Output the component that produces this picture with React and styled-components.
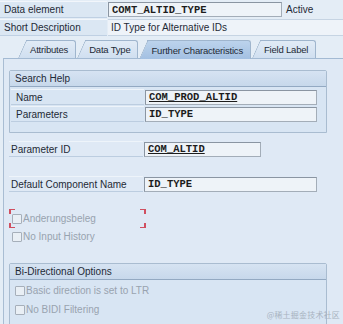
import React from "react";
import styled, { createGlobalStyle, css } from "styled-components";

const Global = createGlobalStyle`
  html, body { margin: 0; padding: 0; }
  body {
    width: 343px; height: 324px; overflow: hidden;
    background: #e4edf6;
    font-family: "Liberation Sans", Arial, sans-serif;
    font-size: 10px;
    color: #1e2a36;
  }
`;

const Page = styled.div`
  position: relative;
  width: 343px;
  height: 324px;
  overflow: hidden;
`;

const HeadGrid = styled.div`
  display: grid;
  grid-template-columns: 107px 1fr;
  grid-auto-rows: 17px;
  row-gap: 1px;
  padding-top: 1px;
`;

const HeadLabel = styled.div`
  display: flex;
  align-items: center;
  padding-left: 4px;
  background: #dbe7f3;
  border-top: 1px solid #f2f6fb;
  border-bottom: 1px solid #bfd0e3;
`;

const HeadValue = styled.div`
  display: flex;
  align-items: center;
  gap: 4px;
  padding-left: 1px;
`;

const Field = styled.div`
  box-sizing: border-box;
  height: 15px;
  width: ${(p) => p.$w}px;
  display: flex;
  align-items: center;
  padding-left: 3px;
  background: #eef3f8;
  border: 1px solid #a3adb8;
  border-top-color: #8a95a2;
  border-left-color: #8a95a2;
  font-family: "Liberation Mono", "Courier New", monospace;
  font-size: 10.5px;
  font-weight: bold;
  color: #1c1c1c;
  white-space: pre;
  ${(p) =>
    p.$link &&
    css`
      text-decoration: underline;
      text-underline-offset: 1px;
    `}
`;

const ReadOnly = styled.div`
  flex: 1;
  align-self: stretch;
  display: flex;
  align-items: center;
  padding-left: 3px;
  background: #eef3f9;
  border-top: 1px solid #c6d4e3;
  border-bottom: 1px solid #c6d4e3;
`;

const Status = styled.span`
  color: #1e2a36;
`;

const TabStrip = styled.div`
  display: flex;
  align-items: flex-end;
  height: 20px;
  margin-top: 2px;
  padding-left: 26px;
  gap: 9px;
  white-space: nowrap;
`;

const Tab = styled.div`
  position: relative;
  z-index: 0;
  height: 17px;
  display: flex;
  align-items: center;
  padding: 0 7px 0 4px;
  font-size: 9.5px;
  letter-spacing: -0.2px;
  border: 1px solid #9fb5cd;
  border-left: none;
  border-bottom: none;
  border-radius: 0 3px 0 0;
  color: #1e2a36;
  background: ${(p) =>
    p.$active
      ? "linear-gradient(#bcd3ec, #a3c0e2)"
      : "linear-gradient(#e1ebf6, #d0dff0)"};
  ${(p) => p.$active && css`margin-bottom: -1px; height: 18px;`}
  &::before {
    content: "";
    position: absolute;
    z-index: -1;
    left: -8px;
    top: -1px;
    bottom: 0;
    width: 16px;
    background: inherit;
    border-left: 1px solid #9fb5cd;
    border-top: 1px solid #9fb5cd;
    border-radius: 2px 0 0 0;
    transform: skewX(-24deg);
    transform-origin: bottom left;
  }
`;

const Panel = styled.div`
  margin-left: 3px;
  height: 270px;
  background: #dfe9f5;
  border-left: 1px solid #a9bdd3;
  border-top: 1px solid #a3bad3;
  padding: 11px 0 0 5px;
  display: flex;
  flex-direction: column;
`;

const Group = styled.div`
  width: 318px;
  box-sizing: border-box;
  border: 1px solid #a9bcd0;
  border-radius: 2px 2px 0 0;
  background: #d8e5f3;
  margin-top: ${(p) => p.$mt || 0}px;
  margin-bottom: ${(p) => p.$mb || 0}px;
`;

const GroupHead = styled.div`
  height: 15px;
  display: flex;
  align-items: center;
  padding-left: 5px;
  background: linear-gradient(#d6e3f2, #c7d8eb);
  border-bottom: 1px solid #93a9c2;
  color: #1e2a36;
`;

const GroupBody = styled.div`
  padding: 2px 0 ${(p) => p.$pb || 0}px 1px;
  display: flex;
  flex-direction: column;
  gap: ${(p) => p.$gap || 1}px;
`;

const Row = styled.div`
  display: flex;
  align-items: center;
  height: 16px;
  margin-top: ${(p) => p.$mt || 0}px;
`;

const RowLabel = styled.div`
  box-sizing: border-box;
  width: ${(p) => p.$w || 133}px;
  height: 16px;
  display: flex;
  align-items: center;
  padding-left: ${(p) => p.$pl ?? 5}px;
  border-bottom: 1px solid #bccde0;
  border-top: 1px solid #eef4fa;
  margin-right: 1px;
`;

const CheckRow = styled.label`
  position: relative;
  display: flex;
  align-items: center;
  height: 17px;
  gap: 1px;
  padding-left: ${(p) => p.$pl || 3}px;
  color: #98a3af;
`;

const Box = styled.span`
  display: inline-block;
  width: 8px;
  height: 8px;
  border: 1px solid #a6afba;
  background: #e9eff5;
  border-radius: 1px;
`;

const FocusFrame = styled.div`
  position: relative;
  width: 137px;
  padding: 1px 0;
  margin-top: ${(p) => p.$mt || 0}px;
`;

const Corner = styled.span`
  position: absolute;
  width: 4px;
  height: 4px;
  border-color: #d04f60;
  border-style: solid;
  border-width: 0;
  ${(p) => p.$tl && css`left: 0; top: 0; border-left-width: 2px; border-top-width: 1px;`}
  ${(p) => p.$tr && css`right: 0; top: 0; border-right-width: 2px; border-top-width: 1px;`}
  ${(p) => p.$bl && css`left: 0; bottom: 0; border-left-width: 2px; border-bottom-width: 1px;`}
  ${(p) => p.$br && css`right: 0; bottom: 0; border-right-width: 2px; border-bottom-width: 1px;`}
`;

const Watermark = styled.div`
  position: absolute;
  right: 3px;
  bottom: 4px;
  font-family: "Noto Sans CJK SC", sans-serif;
  font-size: 8px;
  color: #a3aeba;
  opacity: 0.9;
  letter-spacing: 0.2px;
`;

export default function App() {
  return (
    <Page>
      <Global />
      <HeadGrid>
        <HeadLabel>Data element</HeadLabel>
        <HeadValue>
          <Field $w={174}>COMT_ALTID_TYPE</Field>
          <Status>Active</Status>
        </HeadValue>
        <HeadLabel>Short Description</HeadLabel>
        <HeadValue>
          <ReadOnly>ID Type for Alternative IDs</ReadOnly>
        </HeadValue>
      </HeadGrid>

      <TabStrip>
        <Tab>Attributes</Tab>
        <Tab>Data Type</Tab>
        <Tab $active>Further Characteristics</Tab>
        <Tab>Field Label</Tab>
      </TabStrip>

      <Panel>
        <Group $mb={8}>
          <GroupHead>Search Help</GroupHead>
          <GroupBody $pb={10}>
            <Row>
              <RowLabel>Name</RowLabel>
              <Field $w={172} $link>COM_PROD_ALTID</Field>
            </Row>
            <Row>
              <RowLabel>Parameters</RowLabel>
              <Field $w={172}>ID_TYPE</Field>
            </Row>
          </GroupBody>
        </Group>

        <Row>
          <RowLabel $w={134} $pl={2}>Parameter ID</RowLabel>
          <Field $w={117} $link>COM_ALTID</Field>
        </Row>
        <Row $mt={19}>
          <RowLabel $w={134} $pl={2}>Default Component Name</RowLabel>
          <Field $w={173}>ID_TYPE</Field>
        </Row>

        <FocusFrame $mt={17}>
          <Corner $tl />
          <Corner $tr />
          <Corner $bl />
          <Corner $br />
          <CheckRow>
            <Box />
            Anderungsbeleg
          </CheckRow>
        </FocusFrame>
        <CheckRow>
          <Box />
          No Input History
        </CheckRow>

        <Group $mt={18}>
          <GroupHead>Bi-Directional Options</GroupHead>
          <GroupBody $gap={2} $pb={20}>
            <CheckRow $pl={4}>
              <Box />
              Basic direction is set to LTR
            </CheckRow>
            <CheckRow $pl={4}>
              <Box />
              No BIDI Filtering
            </CheckRow>
          </GroupBody>
        </Group>
      </Panel>
      <Watermark>@稀土掘金技术社区</Watermark>
    </Page>
  );
}
